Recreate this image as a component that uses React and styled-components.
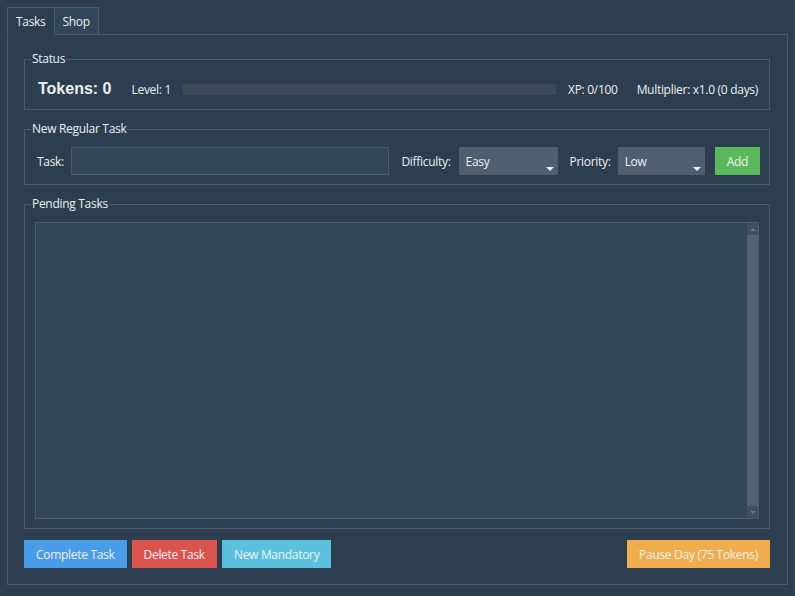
import React from 'react'
import styled, { createGlobalStyle } from 'styled-components'

const GlobalStyle = createGlobalStyle`
    html, body {
        margin: 0;
        padding: 0;
        background: #2c3e50;
    }
    body {
        font-family: "Open Sans", "Noto Sans", sans-serif;
        font-size: 12px;
        letter-spacing: -0.3px;
        color: #ecf0f1;
    }
`

const Window = styled.div`
    width: 795px;
    height: 596px;
    box-sizing: border-box;
    padding: 7px 7px 11px 7px;
    display: flex;
    flex-direction: column;
    background: #2c3e50;
`

const TabBar = styled.div`
    display: flex;
    height: 28px;
    margin-bottom: -1px;
    position: relative;
    z-index: 1;
`

const Tab = styled.div`
    box-sizing: border-box;
    height: 28px;
    padding: 0 8px;
    display: flex;
    align-items: center;
    border: 1px solid #4d5d6d;
    border-bottom: ${p => (p.active ? '1px solid #2c3e50' : '1px solid #4d5d6d')};
    border-left: ${p => (p.first ? '1px solid #4d5d6d' : 'none')};
    background: ${p => (p.active ? '#2c3e50' : '#324559')};
    color: #ecf0f1;
`

const Pane = styled.div`
    flex: 1;
    border: 1px solid #4d5d6d;
    padding: 16px 17px 16px 16px;
    display: flex;
    flex-direction: column;
    gap: 11px;
    min-height: 0;
`

const Group = styled.fieldset`
    margin: 0;
    border: 1px solid #4d5d6d;
    padding: 0;
    min-width: 0;
    display: flex;
    flex-direction: column;
    flex: ${p => (p.grow ? 1 : 'none')};
    min-height: 0;
`

const Legend = styled.legend`
    padding: 0 1px;
    margin-left: 6px;
    height: 16px;
    line-height: 16px;
    color: #ecf0f1;
`

const Body = styled.div`
    flex: 1;
    display: flex;
    flex-direction: column;
    min-height: 0;
    padding: ${p => p.pad};
`

const Row = styled.div`
    display: flex;
    align-items: center;
    height: ${p => p.h || 28}px;
`

const Tokens = styled.span`
    font-family: "Liberation Sans", Arial, sans-serif;
    font-weight: bold;
    font-size: 16px;
    letter-spacing: 0;
    margin-right: 20px;
`

const Label = styled.span`
    margin-right: ${p => p.mr ?? 7}px;
    margin-left: ${p => p.ml || 0}px;
    white-space: nowrap;
`

const Progress = styled.div`
    flex: 1;
    height: 11px;
    background: #3d4b59;
    margin: 0 12px 0 5px;
`

const TextInput = styled.div`
    flex: 1;
    box-sizing: border-box;
    height: 28px;
    background: #324559;
    border: 1px solid #4d5d6d;
`

const Combo = styled.div`
    position: relative;
    box-sizing: border-box;
    width: ${p => p.w}px;
    height: 28px;
    background: #4f5f70;
    padding: 0 7px;
    display: flex;
    align-items: center;
    &::after {
        content: '';
        position: absolute;
        right: 4px;
        bottom: 4px;
        border-left: 4px solid transparent;
        border-right: 4px solid transparent;
        border-top: 4px solid #ecf0f1;
    }
`

const Button = styled.div`
    box-sizing: border-box;
    height: 28px;
    padding: 0 ${p => p.px || 12}px;
    display: flex;
    align-items: center;
    background: ${p => p.bg};
    color: #ecf0f1;
    white-space: nowrap;
`

const List = styled.div`
    flex: 1;
    display: flex;
    justify-content: flex-end;
    background: #324559;
    border: 1px solid #4d5d6d;
    min-height: 0;
`

const ScrollBar = styled.div`
    width: 11px;
    display: flex;
    flex-direction: column;
    background: #526273;
`

const ScrollArrow = styled.div`
    height: 12px;
    background: #3f4f5f;
    display: flex;
    align-items: center;
    justify-content: center;
    &::before {
        content: '';
        border-left: 3px solid transparent;
        border-right: 3px solid transparent;
        ${p => (p.down ? 'border-top: 3px solid #6b7a89;' : 'border-bottom: 3px solid #6b7a89;')}
    }
`

const Actions = styled.div`
    display: flex;
    gap: 5px;
`

const Spacer = styled.div`
    flex: 1;
`

export default function App() {
    return (
        <Window>
            <GlobalStyle />
            <TabBar>
                <Tab active first>Tasks</Tab>
                <Tab>Shop</Tab>
            </TabBar>
            <Pane>
                <Group>
                    <Legend>Status</Legend>
                    <Body pad="12px 11px 10px 13px">
                        <Row h={20}>
                            <Tokens>Tokens: 0</Tokens>
                            <Label>Level: 1</Label>
                            <Progress />
                            <Label mr={19}>XP: 0/100</Label>
                            <Label mr={0}>Multiplier: x1.0 (0 days)</Label>
                        </Row>
                    </Body>
                </Group>
                <Group>
                    <Legend>New Regular Task</Legend>
                    <Body pad="10px 9px 9px 12px">
                        <Row>
                            <Label>Task:</Label>
                            <TextInput />
                            <Label ml={12} mr={8}>Difficulty:</Label>
                            <Combo w={99}>Easy</Combo>
                            <Label ml={12}>Priority:</Label>
                            <Combo w={87}>Low</Combo>
                            <Button bg="#5cb85c" px={12} style={{ marginLeft: 10 }}>Add</Button>
                        </Row>
                    </Body>
                </Group>
                <Group grow>
                    <Legend>Pending Tasks</Legend>
                    <Body pad="10px 10px 9px 10px">
                        <List>
                            <ScrollBar>
                                <ScrollArrow />
                                <Spacer />
                                <ScrollArrow down />
                            </ScrollBar>
                        </List>
                    </Body>
                </Group>
                <Actions>
                    <Button bg="#4a9be8">Complete Task</Button>
                    <Button bg="#d9534f">Delete Task</Button>
                    <Button bg="#5bc0de">New Mandatory</Button>
                    <Spacer />
                    <Button bg="#f0ad4e">Pause Day (75 Tokens)</Button>
                </Actions>
            </Pane>
        </Window>
    )
}
